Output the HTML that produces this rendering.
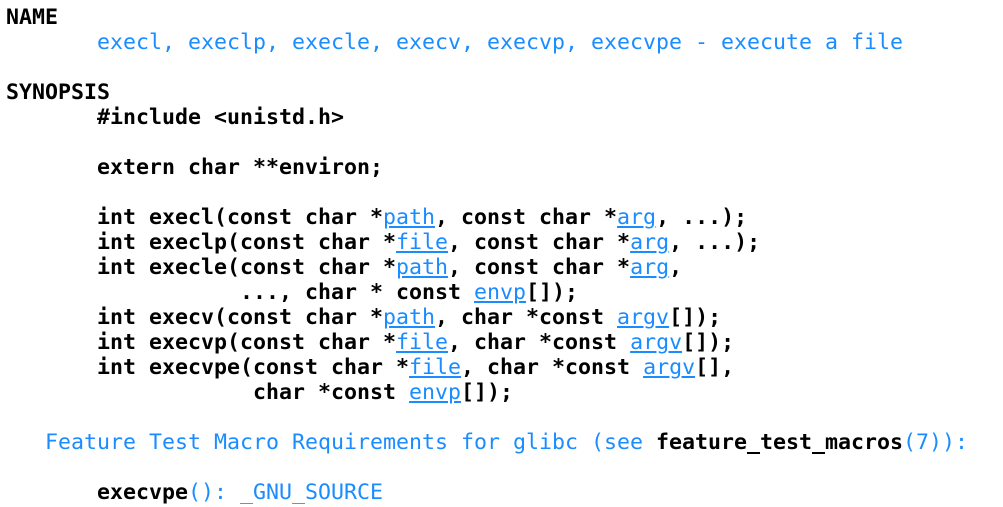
<!DOCTYPE html>
<html><head><style>
body{margin:0;background:#fff;width:1003px;height:507px;overflow:hidden}
pre{margin:0;padding:5px 0 0 6px;font-family:"DejaVu Sans Mono","Liberation Mono",monospace;font-size:21.6px;line-height:25px;color:#000}
b{font-weight:bold;color:#000}
.c{color:#1a8cff}
u{color:#1a8cff;text-decoration:underline}
</style></head><body><pre><b>NAME</b>
<span class="c">       execl, execlp, execle, execv, execvp, execvpe - execute a file</span>

<b>SYNOPSIS</b>
<b>       #include &lt;unistd.h&gt;</b>

<b>       extern char **environ;</b>

<b>       int execl(const char *</b><u>path</u><b>, const char *</b><u>arg</u><b>, ...);</b>
<b>       int execlp(const char *</b><u>file</u><b>, const char *</b><u>arg</u><b>, ...);</b>
<b>       int execle(const char *</b><u>path</u><b>, const char *</b><u>arg</u><b>,</b>
<b>                  ..., char * const </b><u>envp</u><b>[]);</b>
<b>       int execv(const char *</b><u>path</u><b>, char *const </b><u>argv</u><b>[]);</b>
<b>       int execvp(const char *</b><u>file</u><b>, char *const </b><u>argv</u><b>[]);</b>
<b>       int execvpe(const char *</b><u>file</u><b>, char *const </b><u>argv</u><b>[],</b>
<b>                   char *const </b><u>envp</u><b>[]);</b>

<span class="c">   Feature Test Macro Requirements for glibc (see </span><b>feature_test_macros</b><span class="c">(7)):</span>

<b>       execvpe</b><span class="c">(): _GNU_SOURCE</span>
</pre></body></html>
